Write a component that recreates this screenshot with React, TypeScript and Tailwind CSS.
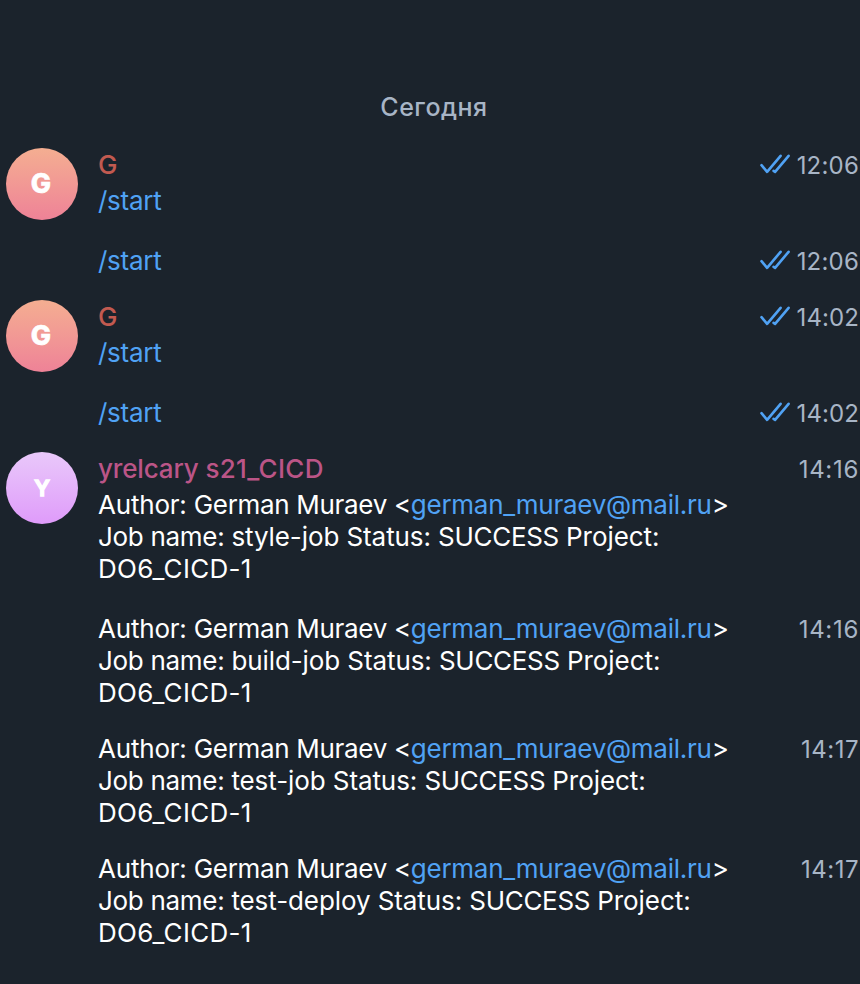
import React from "react";

function Checks() {
  return (
    <svg width="30" height="20" viewBox="0 0 30 20" fill="none" stroke="#50a2f4" strokeWidth="2.6" strokeLinecap="round" strokeLinejoin="round" className="-mt-[3px] mr-[7px]">
      <path d="M1.5 11.2 L7.1 17.8 L20.6 1.8" />
      <path d="M13.6 16.8 L15.1 17.8 L28.6 1.8" />
    </svg>
  );
}

const timeTracking: Record<string, string> = {
  "12:06": "tracking-[0.2px]",
  "14:02": "tracking-[0.1px]",
  "14:16": "tracking-[0.7px]",
  "14:17": "tracking-[0.5px]",
};

function Time({ value, sent }: { value: string; sent?: boolean }) {
  return (
    <div className="flex h-8 w-[102px] shrink-0 items-center justify-end pr-px pt-[3px] text-[24px] text-[#a8b5c6]">
      {sent && <Checks />}
      <span className={timeTracking[value]}>{value}</span>
    </div>
  );
}

function Avatar({ letter, tone, size }: { letter: string; tone: string; size: string }) {
  return (
    <div className={"flex size-[72px] items-center justify-center rounded-full bg-linear-to-b pt-px text-white [stroke-linejoin:round] " + tone + " " + size}>
      {letter}
    </div>
  );
}

function Start({ name, time }: { name?: boolean; time: string }) {
  return (
    <div className={name ? "flex h-[96px]" : "flex h-[56px]"}>
      <div className="w-[93px] shrink-0 pl-1.5">
        {name && <Avatar letter="G" tone="from-[#f4ae91] to-[#ee8297]" size="pr-0.5 text-[27px] font-extrabold [-webkit-text-stroke:0.5px_white]" />}
      </div>
      <div className="flex-1 pl-[5px] pt-px text-[26px] leading-8">
        {name && <div className="h-9 font-medium text-[#c25a50]">G</div>}
        <div className="tracking-[-0.25px] text-[#50a2f4]">/start</div>
      </div>
      <Time value={time} sent />
    </div>
  );
}

function Job({ job, time, first }: { job: string; time: string; first?: boolean }) {
  return (
    <div className={first ? "mb-1 flex" : "flex"}>
      <div className="flex-1 whitespace-nowrap pt-px text-[26px] leading-8 text-white">
        {first && (
          <div className="h-9 font-medium tracking-[-0.15px] text-[#bb5587]">
            yrelcary <span className="tracking-[0.3px]">s21_CICD</span>
          </div>
        )}
        <div className="tracking-[-0.32px]">
          <span className="tracking-[-0.2px]">Author: </span>German Muraev &lt;<span className="tracking-[-0.26px] text-[#50a2f4]">german_muraev@mail.ru</span>&gt;
        </div>
        <div className="tracking-[-0.3px]">
          Job name: <span className="tracking-[-0.09px]">{job} Status: </span>
          <span className="tracking-[-0.3px]">SUCCESS </span>
          <span className="tracking-[-0.05px]">Project:</span>
        </div>
        <div className="tracking-[0.3px]">DO6_CICD-1</div>
      </div>
      <Time value={time} />
    </div>
  );
}

export default function App() {
  return (
    <main className="h-[984px] w-[860px] overflow-hidden bg-[#1b232c] pt-[91px] font-['Inter',sans-serif]">
      <div className="h-[57px] pl-2 text-center text-[25px] leading-8 font-medium tracking-[0.5px] text-[#a8b5c6]">Сегодня</div>
      <Start name time="12:06" />
      <Start time="12:06" />
      <Start name time="14:02" />
      <Start time="14:02" />
      <section className="flex">
        <div className="w-[98px] shrink-0 pl-1.5"><Avatar letter="Y" tone="from-[#e9c8fa] to-[#df9bfa]" size="text-[22px] font-semibold [-webkit-text-stroke:1.4px_white]" /></div>
        <div className="flex flex-1 flex-col gap-[23px]">
          <Job first job="style-job" time="14:16" />
          <Job job="build-job" time="14:16" />
          <Job job="test-job" time="14:17" />
          <Job job="test-deploy" time="14:17" />
        </div>
      </section>
    </main>
  );
}
